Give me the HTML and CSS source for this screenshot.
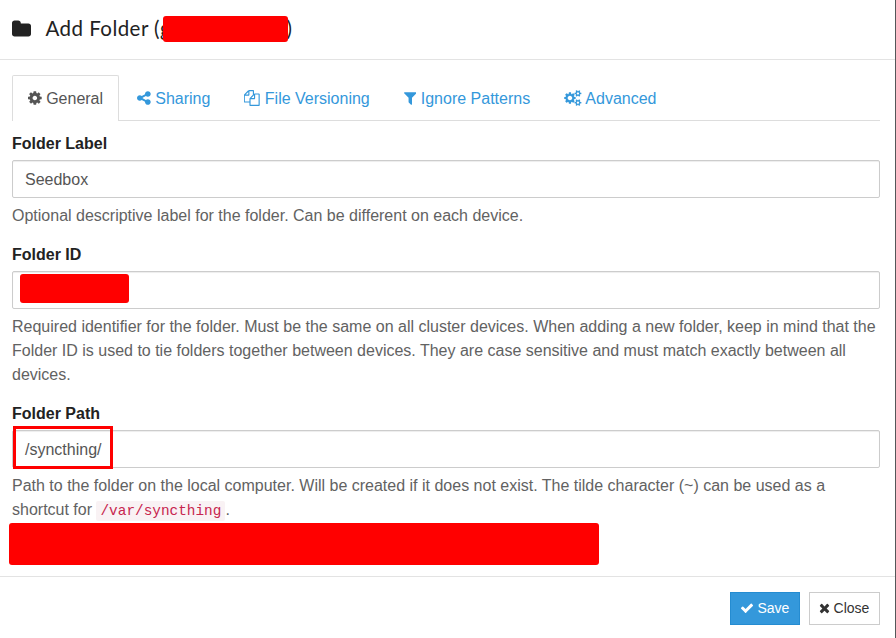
FILE: index.html
```html
<!DOCTYPE html>
<html lang="en">
<head>
<meta charset="utf-8">
<title>Add Folder</title>
<link rel="stylesheet" href="styles.css">
</head>
<body>
<div class="modal">
  <header class="modal-header">
    <svg class="folder-icon" viewBox="0 0 1664 1792"><path d="M1664 608v704q0 92-66 158t-158 66h-1216q-92 0-158-66t-66-158v-960q0-92 66-158t158-66h320q92 0 158 66t66 158v32h672q92 0 158 66t66 158z"/></svg>
    <h4 class="title">Add Folder (g<span class="title-gap"></span>)<span class="redaction redaction-title"></span></h4>
  </header>
  <main class="modal-body">
    <nav class="tabs">
      <a class="tab active"><svg class="icon" style="width:13.71px" viewBox="0 0 1536 1792"><path d="M1024 896q0-106-75-181t-181-75-181 75-75 181 75 181 181 75 181-75 75-181zm512-109v222q0 12-8 23t-20 13l-185 28q-19 54-39 91 35 50 107 138 10 12 10 25t-9 23q-27 37-99 108t-94 71q-12 0-26-9l-138-108q-44 23-91 38-16 136-29 186-7 28-36 28h-222q-14 0-24.500-8.500t-11.500-21.500l-28-184q-49-16-90-37l-141 107q-10 9-25 9-14 0-25-11-126-114-165-168-7-10-7-23 0-12 8-23 15-21 51-66.500t54-70.500q-27-50-41-99l-183-27q-13-2-21-12.500t-8-23.500v-222q0-12 8-23t19-13l186-28q14-46 39-92-40-57-107-138-10-12-10-24 0-10 9-23 26-36 98.500-107.500t94.500-71.500q13 0 26 10l138 107q44-23 91-38 16-136 29-186 7-28 36-28h222q14 0 24.500 8.500t11.500 21.500l28 184q49 16 90 37l142-107q9-9 24-9 13 0 25 10 129 119 165 170 7 8 7 22 0 12-8 23-15 21-51 66.500t-54 70.500q26 50 41 98l183 28q13 2 21 12.500t8 23.500z"/></svg> General</a>
      <a class="tab"><svg class="icon" style="width:13.71px" viewBox="0 0 1536 1792"><path d="M1216 1024q133 0 226.500 93.500t93.500 226.500-93.500 226.500-226.500 93.500-226.500-93.500-93.500-226.500q0-12 2-34l-360-180q-92 86-218 86-133 0-226.500-93.500t-93.500-226.500 93.500-226.500 226.500-93.500q126 0 218 86l360-180q-2-22-2-34 0-133 93.500-226.500t226.500-93.500 226.500 93.500 93.500 226.500-93.500 226.500-226.500 93.500q-126 0-218-86l-360 180q2 22 2 34t-2 34l360 180q92-86 218-86z"/></svg> Sharing</a>
      <a class="tab"><svg class="icon" style="width:16px" viewBox="0 0 1792 1792"><path d="M1664 384q40 0 68 28t28 68v1216q0 40-28 68t-68 28h-960q-40 0-68-28t-28-68v-288h-544q-40 0-68-28t-28-68v-672q0-40 20-88t48-76l408-408q28-28 76-48t88-20h416q40 0 68 28t28 68v328q68-40 128-40h416zm-544 213l-299 299h299v-299zm-640-384l-299 299h299v-299zm196 647l316-316v-416h-384v416q0 40-28 68t-68 28h-416v640h512v-256q0-40 20-88t48-76zm956 804v-1152h-384v416q0 40-28 68t-68 28h-416v640h896z"/></svg> File Versioning</a>
      <a class="tab"><svg class="icon" style="width:12.57px" viewBox="0 0 1408 1792"><path d="M1403 295q17 41-14 70l-493 493v742q0 42-39 59-13 5-25 5-27 0-45-19l-256-256q-19-19-19-45v-486l-493-493q-31-29-14-70 17-39 59-39h1280q42 0 59 39z"/></svg> Ignore Patterns</a>
      <a class="tab"><svg class="icon" style="width:17.6px" viewBox="0 0 1920 1792"><path d="M896 896q0-106-75-181t-181-75-181 75-75 181 75 181 181 75 181-75 75-181zm768 512q0-52-38-90t-90-38-90 38-38 90q0 53 37.500 90.500t90.500 37.500 90.500-37.500 37.500-90.500zm0-1024q0-52-38-90t-90-38-90 38-38 90q0 53 37.500 90.500t90.500 37.500 90.500-37.500 37.500-90.500zm-384 421v185q0 10-7 19.500t-16 10.500l-155 24q-11 35-32 76 34 48 90 115 7 11 7 20 0 12-7 19-23 30-82.500 89.500t-78.500 59.500q-11 0-21-7l-115-90q-37 19-77 31-11 108-23 155-7 24-30 24h-186q-11 0-20-7.500t-10-17.500l-23-153q-34-10-75-31l-118 89q-7 7-20 7-11 0-21-8-144-133-144-160 0-9 7-19 10-14 41-53t47-61q-23-44-35-82l-152-24q-10-1-17-9.500t-7-19.500v-185q0-10 7-19.500t16-10.500l155-24q11-35 32-76-34-48-90-115-7-11-7-20 0-12 7-20 22-30 82-89t79-59q11 0 21 7l115 90q34-18 77-32 11-108 23-154 7-24 30-24h186q11 0 20 7.500t10 17.500l23 153q34 10 75 31l118-89q8-7 20-7 11 0 21 8 144 133 144 160 0 8-7 19-12 16-42 54t-45 60q23 48 34 82l152 23q10 2 17 10.500t7 19.500zm640 533v140q0 16-149 31-12 27-30 52 51 113 51 138 0 4-4 7-122 71-124 71-8 0-46-47t-52-68q-20 2-30 2t-30-2q-14 21-52 68t-46 47q-2 0-124-71-4-3-4-7 0-25 51-138-18-25-30-52-149-15-149-31v-140q0-16 149-31 13-29 30-52-51-113-51-138 0-4 4-7 4-2 35-20t59-34 30-16q8 0 46 46.500t52 67.500q20-2 30-2t30 2q51-71 92-112l6-2q4 0 124 70 4 3 4 7 0 25-51 138 17 23 30 52 149 15 149 31zm0-1024v140q0 16-149 31-12 27-30 52 51 113 51 138 0 4-4 7-122 71-124 71-8 0-46-47t-52-68q-20 2-30 2t-30-2q-14 21-52 68t-46 47q-2 0-124-71-4-3-4-7 0-25 51-138-18-25-30-52-149-15-149-31v-140q0-16 149-31 13-29 30-52-51-113-51-138 0-4 4-7 4-2 35-20t59-34 30-16q8 0 46 46.500t52 67.500q20-2 30-2t30 2q51-71 92-112l6-2q4 0 124 70 4 3 4 7 0 25-51 138 17 23 30 52 149 15 149 31z"/></svg> Advanced</a>
    </nav>
    <section class="group">
      <label class="label">Folder Label</label>
      <div class="input">Seedbox</div>
      <p class="help">Optional descriptive label for the folder. Can be different on each device.</p>
    </section>
    <section class="group">
      <label class="label">Folder ID</label>
      <div class="input"><span class="redaction redaction-id"></span></div>
      <p class="help">Required identifier for the folder. Must be the same on all cluster devices. When adding a new folder, keep in mind that the Folder ID is used to tie folders together between devices. They are case sensitive and must match exactly between all devices.</p>
    </section>
    <section class="group">
      <label class="label">Folder Path</label>
      <div class="input">/syncthing/<span class="highlight"></span></div>
      <p class="help">Path to the folder on the local computer. Will be created if it does not exist. The tilde character (~) can be used as a shortcut for <code>/var/syncthing</code>.</p>
      <span class="redaction redaction-note"></span>
    </section>
  </main>
  <footer class="modal-footer">
    <button class="btn primary"><svg class="icon" viewBox="0 0 1792 1792"><path d="M1671 566q0 40-28 68l-724 724-136 136q-28 28-68 28t-68-28l-136-136-362-362q-28-28-28-68t28-68l136-136q28-28 68-28t68 28l294 295 656-657q28-28 68-28t68 28l136 136q28 28 28 68z"/></svg> Save</button>
    <button class="btn"><svg class="icon close-icon" viewBox="192 0 1408 1792"><path d="M1490 1322q0 40-28 68l-136 136q-28 28-68 28t-68-28l-294-294-294 294q-28 28-68 28t-68-28l-136-136q-28-28-28-68t28-68l294-294-294-294q-28-28-28-68t28-68l136-136q28-28 68-28t68 28l294 294 294-294q28-28 68-28t68 28l136 136q28 28 28 68t-28 68l-294 294 294 294q28 28 28 68z"/></svg> Close</button>
  </footer>
</div>
</body>
</html>
```
FILE: styles.css
```css
* { box-sizing: border-box; }
body {
  margin: 0;
  height: 638px;
  overflow: hidden;
  background: #555759;
  color: #222;
  font: 16px/24px "Liberation Sans", Arial, sans-serif;
}
.modal {
  display: flex;
  flex-direction: column;
  width: 895px;
  height: 638px;
  background: #fff;
}
.modal-header {
  display: flex;
  align-items: center;
  height: 60px;
  padding: 0 12px 3px;
  border-bottom: 1px solid #e3e3e3;
}
.folder-icon {
  width: 19px;
  height: 20.5px;
  margin: 2px 14.5px 0 0;
  fill: #222;
}
.title {
  position: relative;
  margin: 0;
  font: 400 20.5px/24px Lato, sans-serif;
  letter-spacing: 0.45px;
  white-space: nowrap;
}
.title-gap { display: inline-block; width: 115.5px; }
.redaction { position: absolute; background: #f00; border-radius: 3px; }
.redaction-title { left: 117.5px; top: 0; width: 125px; height: 26px; }
.modal-body { height: 516px; padding: 15px 15px 0 12px; }
.tabs {
  display: flex;
  gap: 2px;
  height: 46px;
  margin-bottom: 10px;
  border-bottom: 1px solid #ddd;
}
.tab {
  height: 46px;
  padding: 11px 15px 10px;
  border: 1px solid transparent;
  border-bottom: 0;
  color: #3498db;
  white-space: nowrap;
}
.tab.active {
  background: #fff;
  border-color: #ddd;
  border-radius: 2px 2px 0 0;
  color: #555;
}
.icon {
  display: inline-block;
  height: 1em;
  fill: currentColor;
  vertical-align: -2px;
}
.group { position: relative; margin-bottom: 14px; }
.label { display: block; padding-top: 1px; margin-bottom: 4px; font-weight: 700; }
.input {
  position: relative;
  height: 38px;
  padding: 7px 12px 5px;
  border: 1px solid #ccc;
  border-radius: 2px;
  box-shadow: inset 0 1px 1px rgba(0, 0, 0, 0.075);
  color: #555;
}
.help { margin: 6px 0 0; color: #626262; }
.redaction-id { left: 7px; top: 2px; width: 109px; height: 29px; }
.redaction-note { left: -3px; top: 122px; width: 590px; height: 42px; }
.highlight {
  position: absolute;
  left: -0.5px;
  top: -5px;
  width: 100px;
  height: 43px;
  border: 3px solid #f00;
}
code {
  padding: 2px 4px;
  border-radius: 2px;
  background: #f9f2f4;
  color: #c7254e;
  font: 14.4px "Liberation Mono", monospace;
}
.modal-footer {
  display: flex;
  justify-content: flex-end;
  gap: 9px;
  height: 62px;
  padding: 15px 15px 0;
  border-top: 1px solid #e3e3e3;
}
.btn {
  height: 33px;
  width: 71px;
  padding: 0 1px 0 0;
  border: 1px solid #ccc;
  background: #fff;
  color: #333;
  font: 14px/21px "Liberation Sans", Arial, sans-serif;
  white-space: nowrap;
}
.btn.primary { width: 70px; background: #3498db; border-color: #258cd1; color: #fff; }
.btn .icon { width: 14px; }
.btn .close-icon { width: 11px; }
```
